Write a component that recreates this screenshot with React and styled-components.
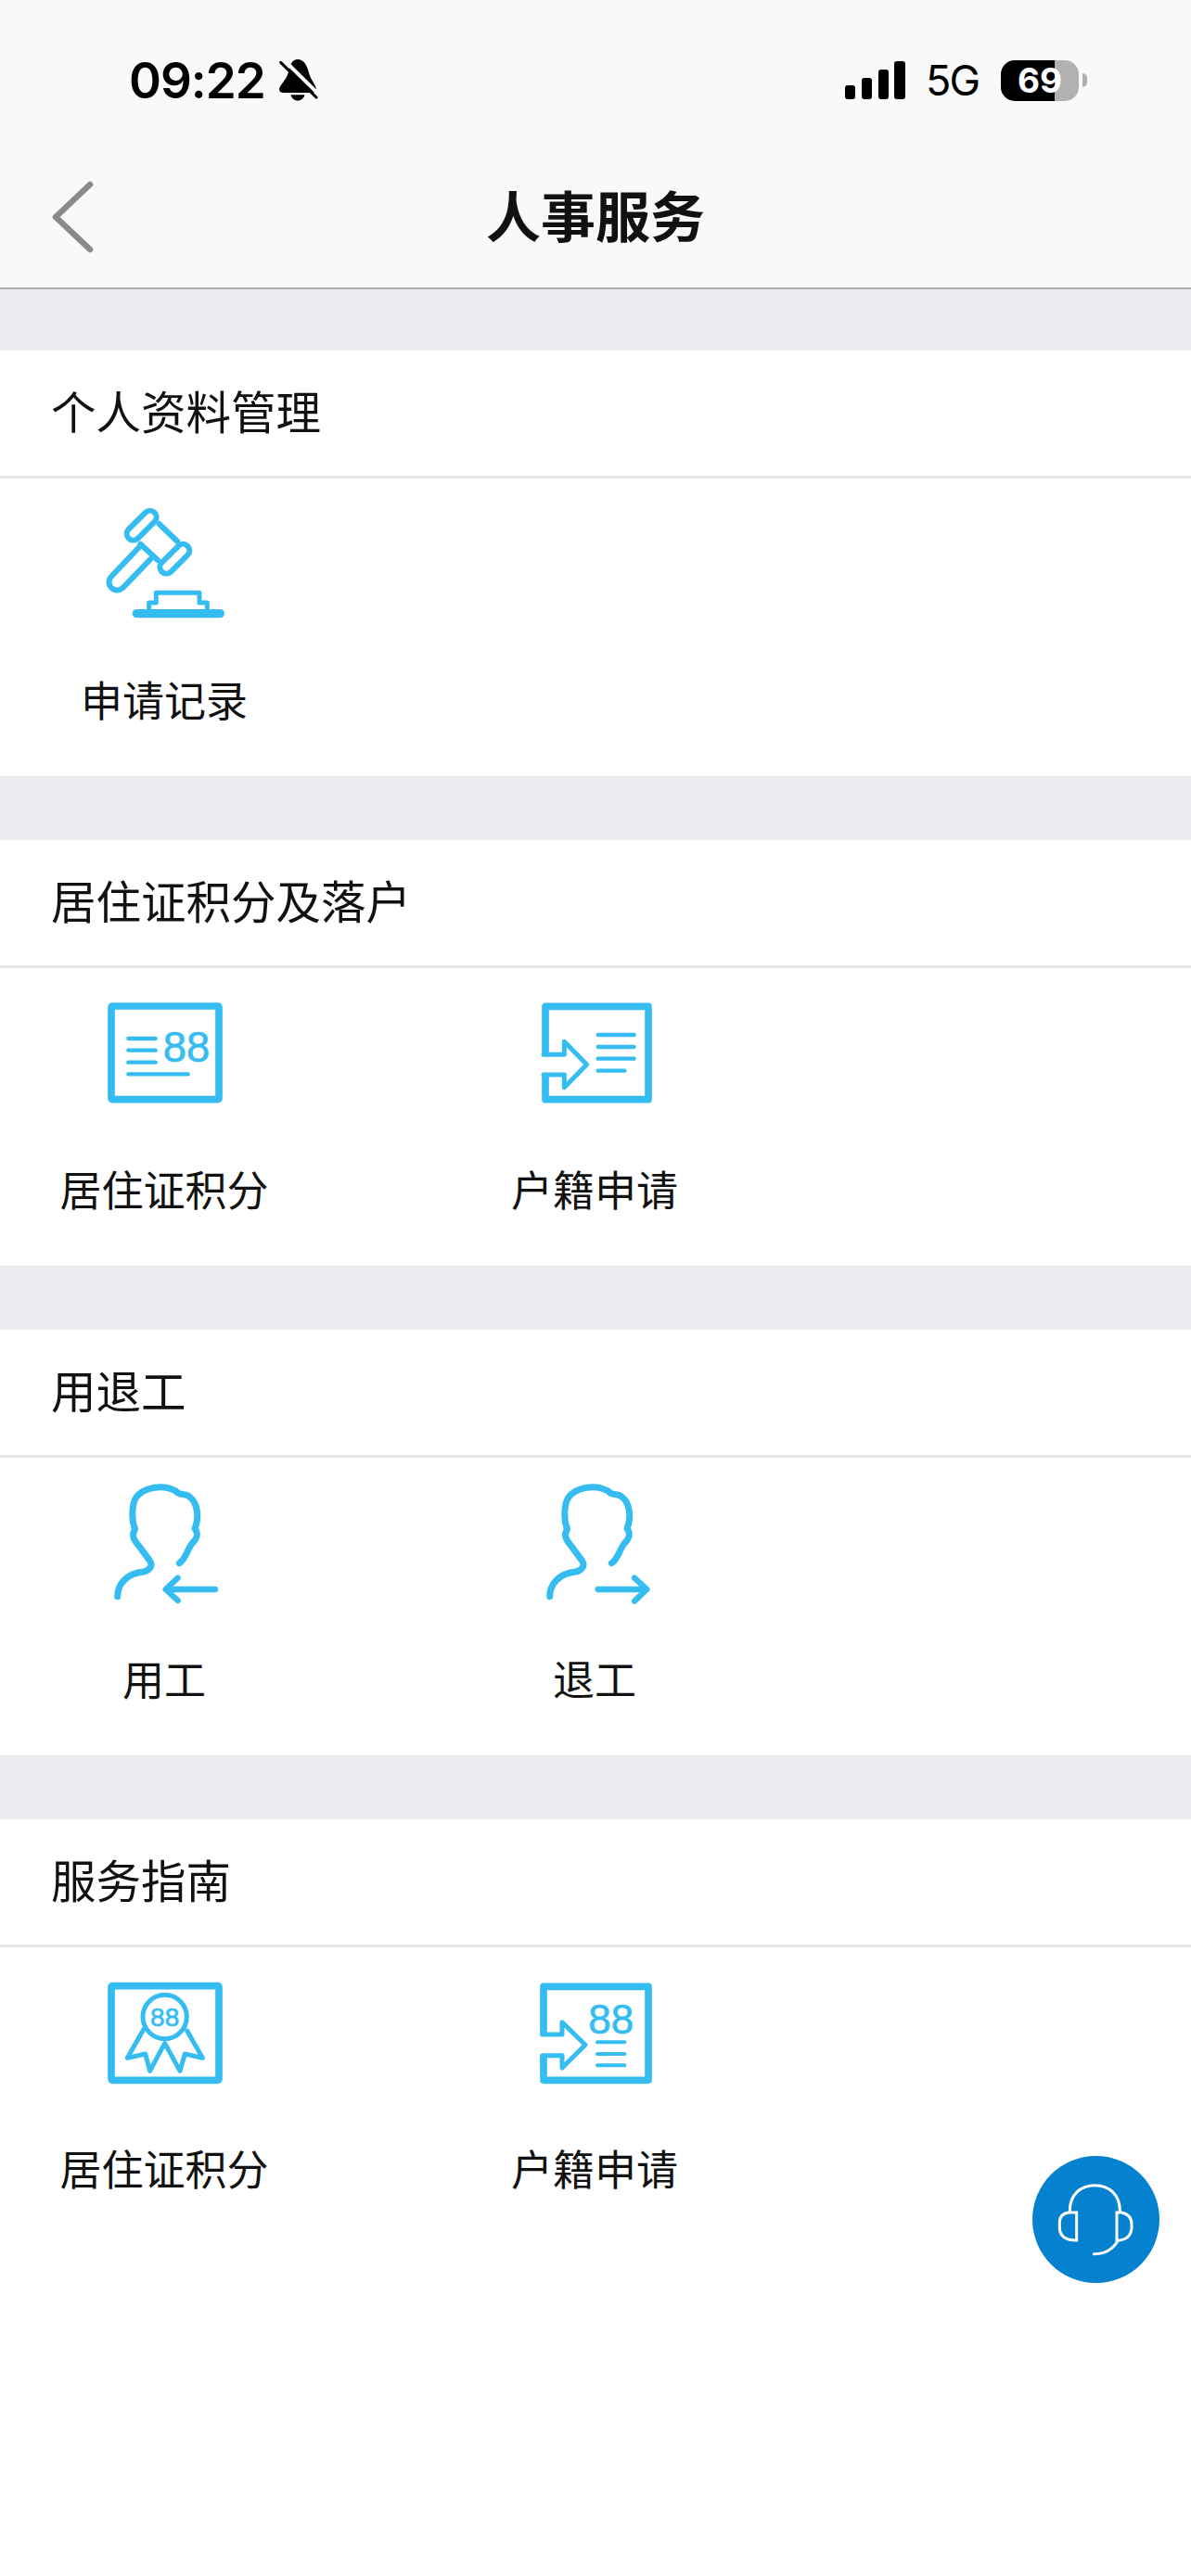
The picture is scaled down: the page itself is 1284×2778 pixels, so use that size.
import styled, { createGlobalStyle } from "styled-components";

const BLUE = "#35bdf2";

const GlobalStyle = createGlobalStyle`
    html, body {
        margin: 0;
        padding: 0;
        background: #fff;
    }
    body {
        font-family: "Noto Sans CJK SC", "Noto Sans", sans-serif;
        color: #111;
    }
`;

const Page = styled.div`
    position: relative;
    width: 1284px;
    min-height: 2778px;
    background: #fff;
    overflow: hidden;
`;

const Header = styled.header`
    background: #f9f9f9;
    border-bottom: 2px solid #aeaeb0;
`;

const StatusBar = styled.div`
    height: 175px;
    box-sizing: border-box;
    padding: 0 112px 2px 139px;
    display: flex;
    align-items: center;
    justify-content: space-between;
    color: #000;
`;

const StatusGroup = styled.div`
    display: flex;
    align-items: center;
    gap: ${(p) => p.$gap || 0}px;
`;

const Time = styled.span`
    font-family: Inter, "Liberation Sans", sans-serif;
    font-size: 53px;
    font-weight: 600;
    line-height: 60px;
    letter-spacing: -1px;
`;

const Network = styled.span`
    font-family: Inter, "Liberation Sans", sans-serif;
    font-size: 45px;
    font-weight: 400;
    line-height: 50px;
    letter-spacing: -2px;
    margin-left: 22px;
    margin-right: 24px;
`;

const BatteryBody = styled.div`
    width: 84px;
    height: 44px;
    border-radius: 15px;
    background: linear-gradient(to right, #000 0, #000 58px, #b1b1b1 58px, #b1b1b1 100%);
    color: #fff;
    font-family: Inter, "Liberation Sans", sans-serif;
    font-size: 37px;
    font-weight: 700;
    line-height: 44px;
    text-align: center;
`;

const BatteryNub = styled.div`
    width: 5px;
    height: 15px;
    margin-left: 4px;
    border-radius: 0 8px 8px 0;
    background: #b1b1b1;
`;

const NavBar = styled.div`
    height: 135px;
    box-sizing: border-box;
    padding: 0 55px 17px;
    display: grid;
    grid-template-columns: 1fr auto 1fr;
    align-items: center;
`;

const NavTitle = styled.h1`
    margin: 0 0 7px;
    font-size: 59px;
    font-weight: 700;
    line-height: 70px;
    color: #111;
`;

const Band = styled.div`
    display: flex;
    flex-direction: column;
    gap: 69px;
    padding-top: 66px;
    background: #ecebf1;
`;

const Section = styled.section`
    background: #fff;
`;

const SectionTitle = styled.h2`
    margin: 0;
    height: 138px;
    box-sizing: border-box;
    padding: 0 0 7px 55px;
    display: flex;
    align-items: center;
    font-size: 48.5px;
    font-weight: 400;
    color: #111;
    border-bottom: 3px solid #e6e6e8;
`;

const Items = styled.div`
    display: grid;
    grid-template-columns: repeat(2, 354px);
    column-gap: 110px;
    padding: 14px 0 53px;
`;

const Item = styled.div`
    display: flex;
    flex-direction: column;
    align-items: center;
`;

const IconSvg = styled.svg`
    display: block;
    width: 160px;
    height: 160px;
    fill: none;
    stroke: ${BLUE};
    stroke-linecap: round;
    stroke-linejoin: round;
`;

const IconDigits = styled.text`
    font-family: "Liberation Sans", Arial, sans-serif;
    fill: ${BLUE};
    stroke: ${BLUE};
    stroke-width: 2;
    text-anchor: middle;
`;

const ItemLabel = styled.span`
    margin-top: 34px;
    font-size: 45px;
    line-height: 60px;
    color: #111;
`;

const SupportButton = styled.button`
    position: absolute;
    left: 1113px;
    top: 2325px;
    width: 137px;
    height: 137px;
    padding: 0;
    border: 0;
    border-radius: 50%;
    background: #0481cf;
    svg {
        display: block;
    }
`;

const GavelIcon = () => (
    <IconSvg viewBox="111 30 480 480">
        <g strokeWidth="18">
            <rect x="219" y="119" width="118" height="42" rx="21" transform="rotate(-45 278 140)" />
            <rect x="326" y="227" width="118" height="42" rx="21" transform="rotate(-45 385 248)" />
            <path d="M335 135 L394 192 M274 200 L330 252" />
            <path d="M272 208 L182 303 A24 24 0 0 0 216 343 L308 248" />
            <path d="M302 410 V390 H325 V358 H465 V390 H490 V410" strokeWidth="15" />
        </g>
        <path d="M262 425 H532" strokeWidth="28" />
    </IconSvg>
);

const ScoreIcon = () => (
    <IconSvg viewBox="21 -6 480 480">
        <rect x="90" y="75" width="348" height="302" rx="3" strokeWidth="23" />
        <path d="M145 180 H233 M145 218 H233 M145 257 H233 M145 295 H338" strokeWidth="13" />
        <IconDigits x="333" y="254" fontSize="136">88</IconDigits>
    </IconSvg>
);

const HukouIcon = () => (
    <IconSvg viewBox="3 -6 480 480">
        <path d="M84 230 V76 H417 V377 H84 V297" strokeWidth="23" strokeLinecap="butt" />
        <path d="M78 232 H145 V190 L218 264 L145 338 V297 H78" strokeWidth="15" />
        <path d="M254 168 H371 M254 207 H371 M254 245 H371 M254 284 H340" strokeWidth="13" />
    </IconSvg>
);

const PERSON_PATH =
    "M80 425 C80 385 110 350 165 345 C185 340 195 325 185 310 L150 262 C130 240 125 225 137 207 C125 180 125 130 140 105 C165 70 230 60 270 85 C280 100 295 90 310 100 C340 120 345 170 330 205 C345 225 335 240 320 255 C305 275 300 305 280 317";

const HireIcon = () => (
    <IconSvg viewBox="-9 18 480 480">
        <path d={PERSON_PATH} strokeWidth="21" />
        <path d="M396 402 H240 M275 365 L236 402 L275 438" strokeWidth="19" />
    </IconSvg>
);

const LeaveIcon = () => (
    <IconSvg viewBox="-27 -12 480 480">
        <path d={PERSON_PATH} strokeWidth="21" transform="translate(-12 -30)" />
        <path d="M224 372 H380 M342 335 L382 372 L342 410" strokeWidth="19" />
    </IconSvg>
);

const GuideScoreIcon = () => (
    <IconSvg viewBox="-9 -18 480 480">
        <rect x="60" y="65" width="348" height="305" rx="3" strokeWidth="23" />
        <circle cx="233" cy="165" r="71" strokeWidth="15" />
        <IconDigits x="233" y="195" fontSize="84">88</IconDigits>
        <path d="M165 205 L112 298 L170 285 L185 340 L233 250 L282 340 L298 285 L355 298 L305 210" strokeWidth="15" />
    </IconSvg>
);

const GuideHukouIcon = () => (
    <IconSvg viewBox="-27 -18 480 480">
        <path d="M48 222 V67 H387 V370 H48 V290" strokeWidth="23" strokeLinecap="butt" />
        <path d="M44 222 H108 V182 L183 256 L108 330 V290 H44" strokeWidth="15" />
        <IconDigits x="266" y="219" fontSize="132">88</IconDigits>
        <path d="M222 247 H310 M222 285 H310 M222 322 H310" strokeWidth="12" />
    </IconSvg>
);

const SECTIONS = [
    { title: "个人资料管理", items: [{ label: "申请记录", Icon: GavelIcon }] },
    {
        title: "居住证积分及落户",
        items: [
            { label: "居住证积分", Icon: ScoreIcon },
            { label: "户籍申请", Icon: HukouIcon },
        ],
    },
    {
        title: "用退工",
        items: [
            { label: "用工", Icon: HireIcon },
            { label: "退工", Icon: LeaveIcon },
        ],
    },
    {
        title: "服务指南",
        items: [
            { label: "居住证积分", Icon: GuideScoreIcon },
            { label: "户籍申请", Icon: GuideHukouIcon },
        ],
    },
];

const App = () => {
    return (
        <Page>
            <GlobalStyle />
            <Header>
                <StatusBar>
                    <StatusGroup $gap={15}>
                        <Time>09:22</Time>
                        <svg width="42" height="45" viewBox="540 75 126 135">
                            <path d="M600 75 C580 75 575 95 570 115 C566 140 540 160 540 172 C540 180 545 183 555 183 H645 C655 183 660 180 660 172 C660 160 640 140 635 115 C630 95 620 75 600 75 Z M578 190 C582 215 618 215 622 190 Z" fill="#000" />
                            <path d="M553 75 L668 188" stroke="#f9f9f9" strokeWidth="12" />
                            <path d="M545 85 L660 198" stroke="#000" strokeWidth="9" strokeLinecap="round" />
                        </svg>
                    </StatusGroup>
                    <StatusGroup>
                        <svg width="65" height="41" viewBox="0 0 65 41" fill="#000">
                            <rect x="0" y="26" width="11" height="15" rx="3" />
                            <rect x="18" y="18" width="11" height="23" rx="3" />
                            <rect x="36" y="9" width="11" height="32" rx="3" />
                            <rect x="53" y="0" width="12" height="41" rx="3" />
                        </svg>
                        <Network>5G</Network>
                        <BatteryBody>69</BatteryBody>
                        <BatteryNub />
                    </StatusGroup>
                </StatusBar>
                <NavBar>
                    <svg width="46" height="80" viewBox="0 0 46 80" fill="none">
                        <path d="M42 5 L5 40 L42 75" stroke="#8a8a8a" strokeWidth="6.5" strokeLinecap="round" strokeLinejoin="round" />
                    </svg>
                    <NavTitle>人事服务</NavTitle>
                </NavBar>
            </Header>
            <Band>
                {SECTIONS.map((section) => (
                    <Section key={section.title}>
                        <SectionTitle>{section.title}</SectionTitle>
                        <Items>
                            {section.items.map(({ label, Icon }) => (
                                <Item key={label}>
                                    <Icon />
                                    <ItemLabel>{label}</ItemLabel>
                                </Item>
                            ))}
                        </Items>
                    </Section>
                ))}
            </Band>
            <SupportButton aria-label="客服">
                <svg width="137" height="137" viewBox="69 45 411 411" fill="none" stroke="#fff" strokeWidth="9" strokeLinecap="round">
                    <path d="M190 222 C190 170 225 140 271 140 C317 140 352 170 352 222" />
                    <path d="M212 228 H187 Q157 232 157 260 V280 Q160 318 212 318 Z" />
                    <path d="M342 228 H357 Q390 235 390 265 V280 Q385 318 342 318 Z" />
                    <path d="M345 320 Q320 362 268 362" />
                </svg>
            </SupportButton>
        </Page>
    );
};

export default App;
